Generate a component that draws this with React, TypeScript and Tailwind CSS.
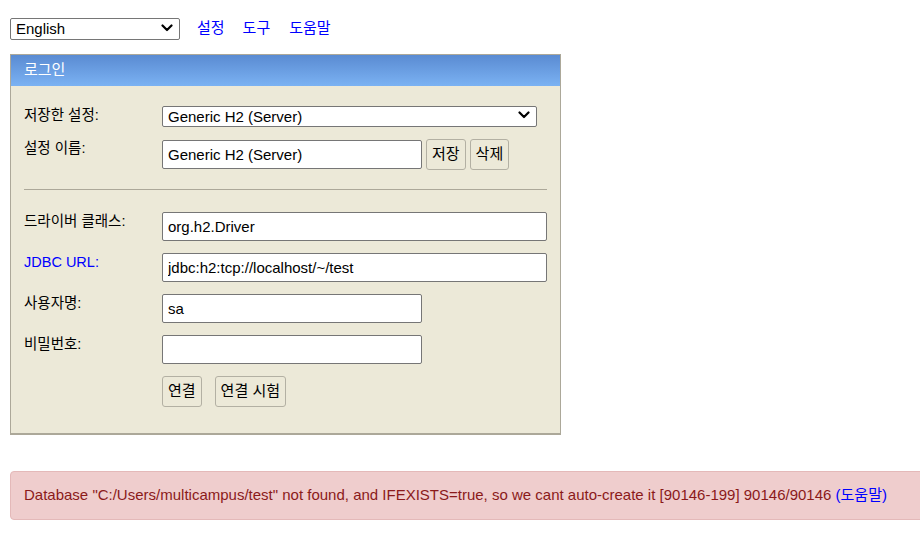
const font = "font-['Arial','Liberation_Sans','Noto_Sans_CJK_KR',sans-serif]";

function Chevron() {
  return (
    <svg
      width="12"
      height="8"
      viewBox="0 0 12 8"
      className="absolute right-[7px] top-1/2 -translate-y-1/2 pointer-events-none"
    >
      <path d="M1.5 1.5 L6 6 L10.5 1.5" fill="none" stroke="#000" strokeWidth="2.2" strokeLinecap="round" strokeLinejoin="round" />
    </svg>
  );
}

function Select({ w, h, options }: { w: string; h: string; options: string[] }) {
  return (
    <div className={`relative ${w} ${h}`}>
      <select
        defaultValue={options[0]}
        className={`appearance-none w-full h-full border border-[#767676] rounded-[2px] bg-white text-[15px] leading-[18px] text-black pl-[5px] pr-[24px] outline-none ${font}`}
      >
        {options.map((o) => (
          <option key={o} value={o}>
            {o}
          </option>
        ))}
      </select>
      <Chevron />
    </div>
  );
}

function Label({ children, blue }: { children: React.ReactNode; blue?: boolean }) {
  return (
    <div className={`w-[138px] shrink-0 text-[14.5px] leading-[18px] ${blue ? "text-[#0000ff]" : "text-black"}`}>
      {children}
    </div>
  );
}

function TextBox({ value, wide, type = "text" }: { value: string; wide?: boolean; type?: string }) {
  return (
    <input
      type={type}
      defaultValue={value}
      className={`${wide ? "w-[385px]" : "w-[260px]"} h-[29px] bg-white border border-[#767676] rounded-[2px] px-[5px] text-[15px] text-black outline-none ${font}`}
    />
  );
}

function Btn({ children }: { children: React.ReactNode }) {
  return (
    <button className={`h-[31px] px-[5px] bg-[#ece9d8] border border-[#b3b0a3] rounded-[3px] text-[15px] text-black ${font}`}>
      {children}
    </button>
  );
}

export default function App() {
  return (
    <div className={`min-h-[542px] bg-white overflow-hidden ${font}`}>
      <div className="pl-[10px] pt-[17px] flex items-center">
        <Select w="w-[170px]" h="h-[22px]" options={["English", "한국어"]} />
        <div className="flex ml-[17px] text-[15px] text-[#0000ff]">
          <a className="cursor-pointer">설정</a>
          <a className="cursor-pointer ml-[18px]">도구</a>
          <a className="cursor-pointer ml-[19px]">도움말</a>
        </div>
      </div>

      <div className="ml-[10px] mt-[14px] w-[551px] border border-[#aca899] border-b-2 bg-[#ece9d8]">
        <div className="h-[31px] bg-gradient-to-b from-[#5a8bd2] to-[#7bb2f3] text-white text-[15px] pl-[13px] flex items-center">
          로그인
        </div>

        <div className="pl-[13px] pr-[13px] pt-[19px] pb-[26px]">
          <div className="flex items-start">
            <div className="w-[138px] shrink-0 text-[14.5px] leading-[21px]">저장한 설정:</div>
            <Select w="w-[375px]" h="h-[21px]" options={["Generic H2 (Server)", "Generic H2 (Embedded)"]} />
          </div>

          <div className="flex items-start mt-[13px]">
            <Label>설정 이름:</Label>
            <div className="mt-[1px]">
              <TextBox value="Generic H2 (Server)" />
            </div>
            <div className="flex gap-[4px] ml-[4px]">
              <Btn>저장</Btn>
              <Btn>삭제</Btn>
            </div>
          </div>

          <div className="h-px bg-[#aca899] mt-[19px] mb-[22px]" />

          <div className="flex flex-col gap-[12px]">
            <div className="flex items-start">
              <Label>드라이버 클래스:</Label>
              <TextBox value="org.h2.Driver" wide />
            </div>
            <div className="flex items-start">
              <Label blue>JDBC URL:</Label>
              <TextBox value="jdbc:h2:tcp://localhost/~/test" wide />
            </div>
            <div className="flex items-start">
              <Label>사용자명:</Label>
              <TextBox value="sa" />
            </div>
            <div className="flex items-start">
              <Label>비밀번호:</Label>
              <TextBox value="" type="password" />
            </div>
            <div className="flex items-start">
              <div className="w-[138px] shrink-0" />
              <div className="flex gap-[13px]">
                <Btn>연결</Btn>
                <Btn>연결 시험</Btn>
              </div>
            </div>
          </div>
        </div>
      </div>

      <div className="ml-[10px] mt-[36px] w-[940px] h-[49px] bg-[#efcdcd] border border-[#e4b9b9] rounded-[4px] pl-[13px] flex items-center text-[15px] text-[#8b1a1a]">
        <span className="whitespace-nowrap">
          Database "C:/Users/multicampus/test" not found, and IFEXISTS=true, so we cant auto-create it [90146-199] 90146/90146{" "}
          <a className="text-[#0000ff] cursor-pointer">(도움말)</a>
        </span>
      </div>
    </div>
  );
}
